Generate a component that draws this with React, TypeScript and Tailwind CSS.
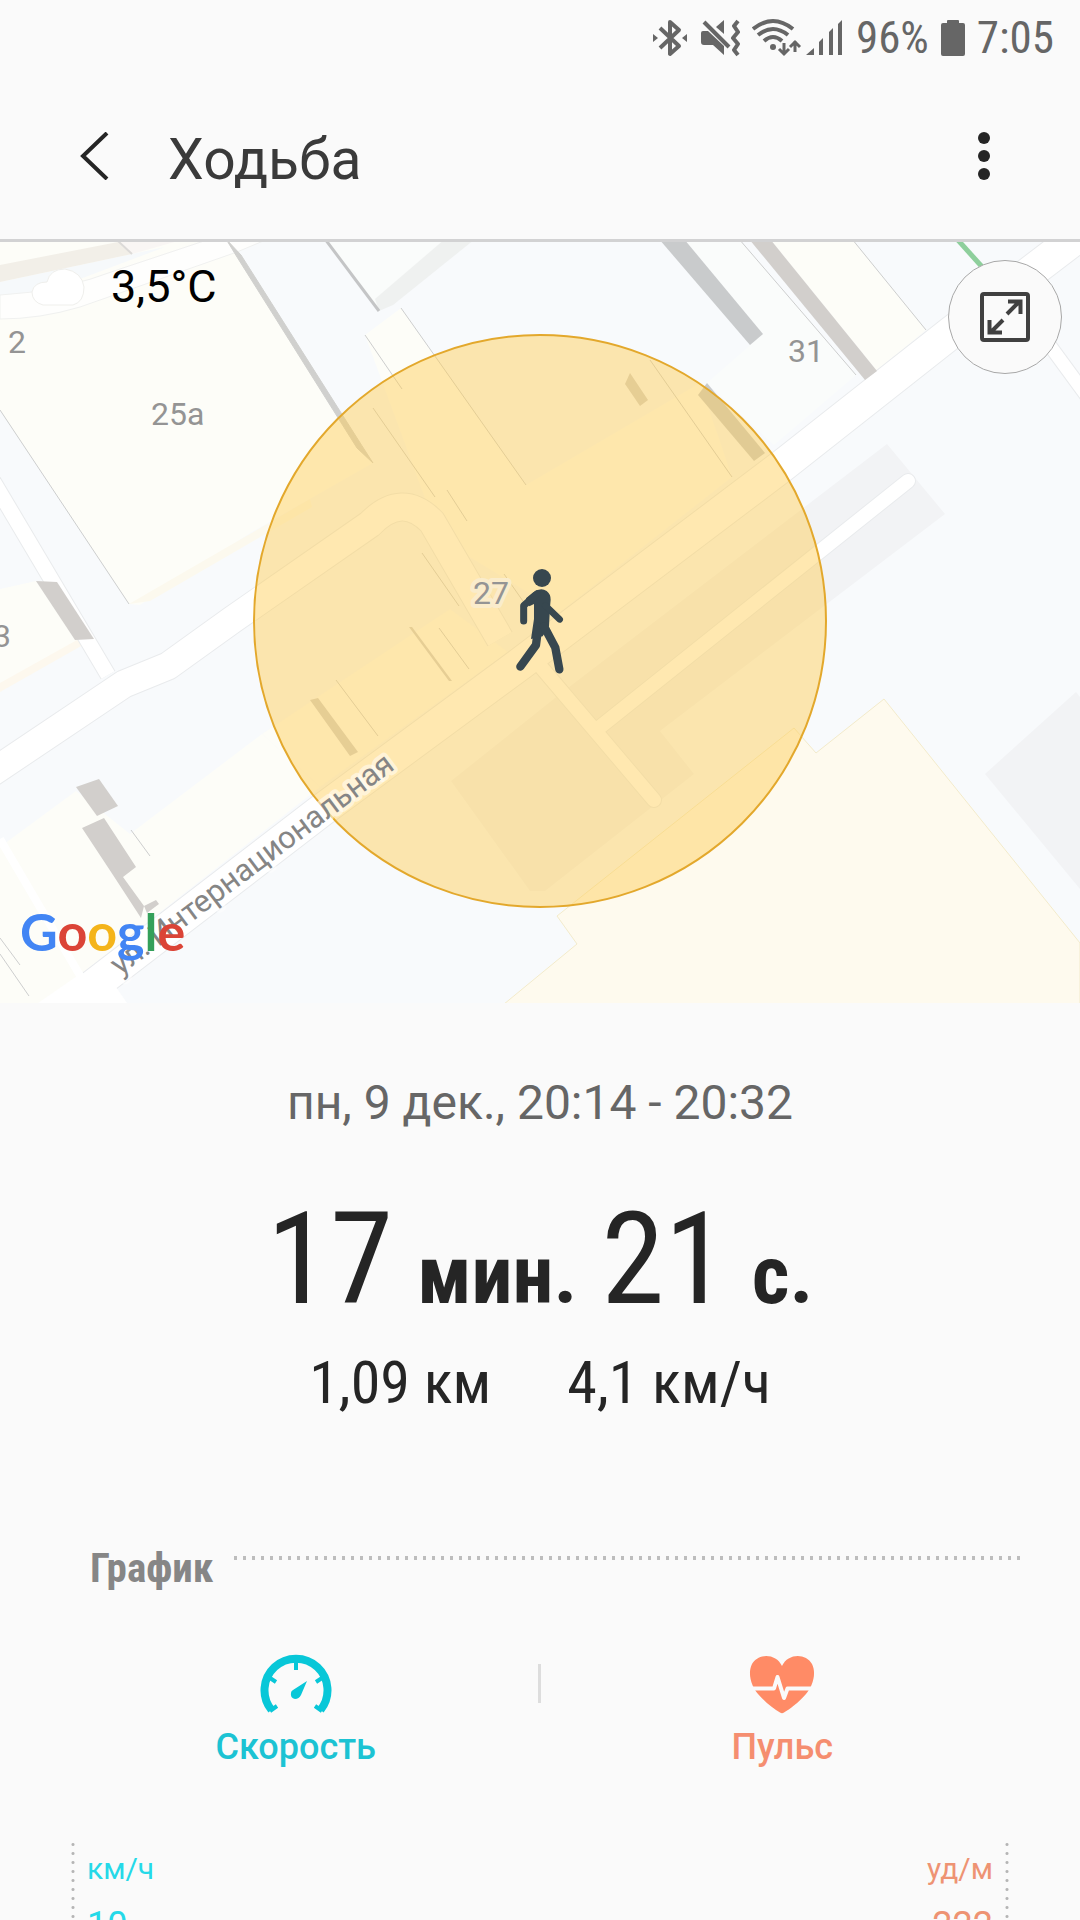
import React from "react";

const BluetoothIcon = () => (
  <svg viewBox="0 0 36 38" className="w-9 h-10" fill="none" stroke="#666666" strokeWidth="4" strokeLinejoin="round">
    <path d="M8 9 L27 27 L18 35 V3 L27 11 L8 29" />
    <path d="M1 15 L6 19 L1 23 Z M35 15 L30 19 L35 23 Z" fill="#666666" stroke="none" />
  </svg>
);

const MuteIcon = () => (
  <svg viewBox="0 0 40 38" className="w-10 h-10" fill="#666666">
    <path d="M1 14 Q1 12 3 12 H8 L24 27 V36 L13 26 H4 Q1 26 1 23 Z" />
    <path d="M24 1 V15 L16 8 Z" />
    <path d="M4 3 L29 28" stroke="#666666" strokeWidth="4" />
    <path d="M38 2 L34 7 L38 13 L33 19 L38 25 L34 31 L38 36" fill="none" stroke="#666666" strokeWidth="4" strokeLinejoin="round" />
  </svg>
);

const WifiIcon = () => (
  <svg viewBox="0 0 50 38" className="w-[50px] h-10" fill="none" stroke="#666666" strokeWidth="4">
    <path d="M1 10 Q21 -6 41 10" />
    <path d="M6 16 Q21 4 36 16" />
    <path d="M12 22 Q21 14 30 22" />
    <circle cx="21" cy="28" r="3" fill="#666666" stroke="none" />
    <path d="M32 24 V35 M27 30 L32 35 L37 30 M43 33 V22 M38 28 L43 23 L48 28" strokeWidth="3" />
  </svg>
);

const SignalIcon = () => (
  <svg viewBox="0 0 38 38" className="w-[38px] h-10" fill="#666666">
    <path d="M0 36 L8 29 V36 Z M13 36 V23 L17 19 V36 Z M23 36 V13 L27 9 V36 Z M32 36 V5 L36 1 V36 Z" />
  </svg>
);

const BatteryIcon = () => (
  <svg viewBox="0 0 24 38" className="w-6 h-10" fill="#666666">
    <path d="M6 4 V2 Q6 1 7 1 H17 Q18 1 18 2 V4 H22 Q24 4 24 6 V35 Q24 37 22 37 H2 Q0 37 0 35 V6 Q0 4 2 4 Z" />
  </svg>
);

const SpeedIcon = () => (
  <svg viewBox="0 0 72 60" className="w-[72px] h-[60px]" fill="none" stroke="#08c7d8">
    <path d="M11.5 56 A31.5 31.5 0 1 1 60.5 56" strokeWidth="8" />
    <path d="M36 8 V16 M10 24 L16 28 M62 24 L56 28 M10 57 L17 52 M62 57 L55 52" strokeWidth="4" />
    <path d="M47 27 L41 41 Q39 45 35 45 Q30 44 31 39 Q31 37 33 36 Z" fill="#08c7d8" stroke="none" />
  </svg>
);

const HeartIcon = () => (
  <svg viewBox="0 0 72 60" className="w-[72px] h-[60px]">
    <path
      d="M36 12 C30 -1 12 -1 6 10 C1 20 6 33 12 40 C20 49 28 55 34 58.5 Q36 60 38 58.5 C44 55 52 49 60 40 C66 33 71 20 66 10 C60 -1 42 -1 36 12 Z"
      fill="#ff8b66"
    />
    <path d="M5 34.5 H28 L31.5 23 L38 44 L41.5 34.5 H67" fill="none" stroke="#fafafa" strokeWidth="4" strokeLinejoin="round" />
  </svg>
);

const StreetMap = () => (
  <svg viewBox="0 243 1080 761" className="block w-full font-[Roboto,sans-serif]" role="img" aria-label="Карта">
    <rect x="0" y="243" width="1080" height="761" fill="#f8fafc" />

    {/* buildings */}
    <g fill="#fdfdf8">
      <path d="M0 240 H226 L373 464 L250 534 L140 606 L129 605 L0 411 Z" />
      <path d="M0 590 L36 582 L77 641 L0 693 Z" />
      <path d="M0 848 L76 792 L130 835 L262 735 L320 788 L90 968 L40 1004 H0 Z" />
      <path d="M770 240 H852 L926 331 L877 372 Z" />
      <path d="M365 336 L401 309 L526 486 L700 384 L732 478 L560 613 L440 540 Z" />
      <path d="M262 735 L450 610 L508 653 L320 788 Z" />
    </g>
    <g fill="#fafcfb">
      <path d="M325 240 H445 L379 312 Z" />
      <path d="M684 240 H739 L856 376 L774 446 L707 384 L763 335 Z" />
    </g>
    <path d="M129 605 L255 532 L310 500 L312 508 L150 602 Z" fill="#fcf9ee" />
    <path d="M0 693 L90 642 L77 641 L0 684 Z" fill="#fdf8ee" />
    <path d="M379 312 L375 300 L445 240 H475 L393 306 Z" fill="#eff1f0" />

    {/* parking lots */}
    <g fill="#f2f3f5">
      <path d="M887 445 L945 515 L660 732 L694 775 L545 892 H530 L451 782 L560 695 Z" />
      <path d="M985 775 L1076 693 L1080 698 V890 Z" />
    </g>

    <path
      d="M884 700 L1080 944 V1010 H498 L577 945 L557 917 L794 729 L816 754 Z"
      fill="#fefaee"
      stroke="#f3ebcb"
    />

    {/* upper left road */}
    <path d="M0 283 L132 255 L165 248 L80 280 L30 296 H0 Z" fill="#f6f9fb" />
    <path d="M0 296 Q60 293 120 270 L210 240 H268 L237 253 L80 308 Q40 320 0 320 Z" fill="#fefefd" stroke="#f0f1f0" />
    <path d="M0 266 L118 243 L132 255 L0 283 Z" fill="#f2efe8" />
    <path d="M118 240 H185 L132 255 Z" fill="#f9f6f4" />
    <path d="M118 242 L132 255" stroke="#dcdad8" strokeWidth="2" />

    {/* road edges first, the white bodies go over them */}
    <g fill="none" stroke="#e9ebed" strokeLinejoin="round">
      <path d="M-10 477 L108 676" strokeWidth="17" />
      <path d="M-10 775 L124 685 L168 667 L232 621 L370 525 Q402 492 432 523 L500 640" strokeWidth="29" />
      <path d="M50 1020 L322 811 L520 665 L782 467 L952 333 L1090 228" strokeWidth="34" />
      <path d="M908 482 L600 728 M530 655 L654 801" strokeWidth="16" strokeLinecap="round" />
      <path d="M1045 340 L1100 415" strokeWidth="15" />
    </g>
    <g fill="none" stroke="#ffffff" strokeLinejoin="round">
      <path d="M-10 477 L108 676" strokeWidth="15" />
      <path d="M-10 775 L124 685 L168 667 L232 621 L370 525 Q402 492 432 523 L500 640" strokeWidth="27" />
      <path d="M50 1020 L322 811 L520 665 L782 467 L952 333 L1090 228" strokeWidth="32" />
      <path d="M908 482 L600 728 M530 655 L654 801" strokeWidth="14" strokeLinecap="round" />
      <path d="M1045 340 L1100 415" strokeWidth="13" />
      <path d="M0 840 L85 985" strokeWidth="8" />
    </g>
    <path d="M38 1004 L80 975 L116 988 L127 1004 Z" fill="#ffffff" />

    {/* walls and shadows */}
    <path d="M226 240 L241 256 L364 450 L373 464 L357 449 L237 258 Z" fill="#d0d0ce" stroke="#d0d0ce" />
    <path d="M325 240 L379 312" stroke="#c4c5c6" strokeWidth="3" />
    <g fill="#c9cbcc">
      <path d="M659 240 H684 L763 335 L750 346 Z" />
      <path d="M707 384 L765 454 L754 462 L698 396 Z" />
    </g>
    <g fill="#d2cfcc">
      <path d="M749 240 H770 L877 372 L865 381 Z" />
      <path d="M36 582 L57 583 L94 640 L75 641 Z" />
      <path d="M630 374 L648 401 L640 407 L625 385 Z" />
      <path d="M310 701 L318 699 L358 753 L350 757 Z" />
      <path d="M409 628 H412 L452 682 H449 Z" />
      <path d="M76 788 L99 780 L118 807 L97 817 Z" />
      <path d="M82 829 L104 819 L136 868 L123 878 L144 907 L141 919 L113 876 Z" />
      <path d="M144 907 L156 901 L159 905 L147 914 Z" />
    </g>
    <g stroke="#cdcece" strokeWidth="1">
      <path d="M0 411 L129 605 M401 309 L526 486 M365 336 L402 390 M373 409 L435 498 M447 491 L467 522" />
      <path d="M422 554 L459 607 M504 575 L525 605 M650 361 L732 478 M739 240 L856 376 M852 240 L926 331" />
      <path d="M336 681 L378 737 M439 629 L469 670 M131 831 L150 857 M0 939 L20 966 M0 955 L29 997" />
    </g>
    <path d="M957 240 L984 270" stroke="#8ecf9c" strokeWidth="5" />

    <circle cx="540" cy="622" r="286" fill="#ffcd50" fillOpacity="0.45" stroke="#e3a82c" strokeWidth="2" />

    {/* weather */}
    <path
      d="M43 306 Q32 303 32 293 Q34 283 47 283 Q50 270 65 270 Q82 273 84 288 Q84 303 73 306 Z"
      fill="#ffffff"
      stroke="#efefec"
    />
    <text x="111" y="303" fontSize="45" fill="#000000">3,5°C</text>

    <g fontSize="32" fill="#949494">
      <text x="8" y="354">2</text>
      <text x="151" y="426">25a</text>
      <text x="788" y="363">31</text>
      <text x="-7" y="648">3</text>
      <text x="473" y="605" stroke="#faeccb" strokeWidth="8" strokeLinejoin="round" paintOrder="stroke">27</text>
      <text
        x="0"
        y="0"
        transform="translate(120 977) rotate(-37)"
        fontSize="31"
        fill="#858585"
        stroke="#ffffff"
        strokeOpacity="0.5"
        strokeWidth="8"
        strokeLinejoin="round"
        paintOrder="stroke"
      >
        ул. Интернациональная
      </text>
    </g>

    {/* walking man */}
    <g transform="translate(480 540) scale(0.3333)" fill="#37474f" stroke="#37474f" strokeLinecap="round" strokeLinejoin="round">
      <circle cx="186" cy="117" r="27" stroke="none" />
      <path d="M160 160 Q182 144 200 156 Q212 165 212 182 L210 205 L207 262 L188 292 L153 300 L162 240 L162 195 L148 202 L138 178 Z" stroke="none" />
      <path d="M172 164 L131 200 L131 246" fill="none" strokeWidth="21" />
      <path d="M196 200 L239 241" fill="none" strokeWidth="20" />
      <path d="M175 262 L168 318 L121 383" fill="none" strokeWidth="25" />
      <path d="M192 262 L226 326 L238 391" fill="none" strokeWidth="25" />
    </g>
  </svg>
);

const googleLetters = [
  { letter: "G", color: "text-[#4285f4]" },
  { letter: "o", color: "text-[#db4437]" },
  { letter: "o", color: "text-[#f4b41a]" },
  { letter: "g", color: "text-[#4285f4]" },
  { letter: "l", color: "text-[#34a05a]" },
  { letter: "e", color: "text-[#db4437]" },
];

const App: React.FC = () => {
  return (
    <div className="h-screen overflow-hidden bg-[#fafafa] font-[Roboto,sans-serif] text-[#252525]">
      <div className="flex items-center justify-end h-[76px] pr-[26px] font-['Roboto_Condensed',Roboto,sans-serif] text-[45px] text-[#666666]">
        <BluetoothIcon />
        <span className="ml-3"><MuteIcon /></span>
        <span className="ml-3"><WifiIcon /></span>
        <span className="ml-1"><SignalIcon /></span>
        <span className="ml-3">96%</span>
        <span className="ml-3"><BatteryIcon /></span>
        <span className="ml-3">7:05</span>
      </div>

      <header className="flex items-center h-[166px] pl-[62px] pr-16 pb-1 border-b-3 border-[#d2d2d3]">
        <button type="button" aria-label="Назад" className="w-16 h-16 flex items-center justify-center">
          <svg viewBox="0 0 30 48" className="w-[30px] h-12" fill="none" stroke="#252525" strokeWidth="4">
            <path d="M28 1 L4 24 L28 47" />
          </svg>
        </button>
        <h1 className="ml-[42px] pt-2 text-[57px] leading-16 text-[#3a3a3a]">Ходьба</h1>
        <button type="button" aria-label="Ещё" className="ml-auto w-16 h-16 flex items-center justify-center">
          <svg viewBox="0 0 12 48" className="w-3 h-12" fill="#252525">
            <circle cx="6" cy="6" r="6" />
            <circle cx="6" cy="24" r="6" />
            <circle cx="6" cy="42" r="6" />
          </svg>
        </button>
      </header>

      <section className="relative">
        <StreetMap />
        <button
          type="button"
          aria-label="На весь экран"
          className="absolute top-[18px] right-[18px] w-[114px] h-[114px] rounded-full bg-[#fafafa] border border-[#a8a8a8] flex items-center justify-center"
        >
          <svg viewBox="0 0 50 50" className="w-[50px] h-[50px]" fill="none" stroke="#404040">
            <rect x="2" y="2" width="46" height="46" rx="2" strokeWidth="4" />
            <path d="M27 22 L39 10 M28 9.5 H40.5 V22 M23 28 L11 40 M22 40.5 H9.5 V28" strokeWidth="4" />
          </svg>
        </button>
        <div className="absolute left-5 bottom-10 font-[Lato,sans-serif] font-bold text-[52px] leading-16">
          {googleLetters.map((item, index) => (
            <span key={index} className={item.color}>{item.letter}</span>
          ))}
        </div>
      </section>

      <section className="pt-[66px] text-center">
        <p className="text-[48px] leading-[68px] text-[#666666]">пн, 9 дек., 20:14 - 20:32</p>
        <p className="mt-12 flex items-baseline justify-center gap-6 font-['Roboto_Condensed',Roboto,sans-serif] text-[128px] leading-[148px]">
          <span>17</span>
          <b className="text-[82px]">мин.</b>
          <span>21</span>
          <b className="text-[82px]">с.</b>
        </p>
        <div className="flex justify-center gap-[76px] font-['Roboto_Condensed',Roboto,sans-serif] text-[60px] leading-[68px]">
          <span>1,09 км</span>
          <span>4,1 км/ч</span>
        </div>
      </section>

      <section className="mt-[126px]">
        <div className="flex pl-[90px] pr-[58px]">
          <h2 className="font-['Roboto_Condensed',Roboto,sans-serif] font-bold text-[41px] leading-[50px] text-[#868686]">График</h2>
          <div className="grow ml-[18px] mt-[13px] h-1 bg-[radial-gradient(circle,#bdbdbd_2px,transparent_2px)] bg-[length:9px_4px]"></div>
        </div>

        <div className="mt-[61px] flex items-center pl-[54px] pr-[56px]">
          <button type="button" className="flex-1 flex flex-col items-center">
            <SpeedIcon />
            <span className="mt-3 font-medium text-[36px] leading-[42px] text-[#1cc3d3]">Скорость</span>
          </button>
          <div className="w-[3px] h-[39px] mb-14 bg-[#dddddd]"></div>
          <button type="button" className="flex-1 flex flex-col items-center">
            <HeartIcon />
            <span className="mt-3 font-medium text-[36px] leading-[42px] text-[#f58e70]">Пульс</span>
          </button>
        </div>

        {/* chart axes */}
        <div className="mt-[72px] mx-[71px] flex justify-between h-40">
          <div className="flex">
            <div className="w-1 bg-[radial-gradient(circle,#b5b5b5_1px,transparent_2px)] bg-[length:4px_9px]"></div>
            <div className="ml-3 mt-[11px] text-[#25d9e8]">
              <p className="text-[30px] leading-9">км/ч</p>
              <p className="mt-4 text-[36px] leading-[44px]">10</p>
            </div>
          </div>
          <div className="flex text-right">
            <div className="mr-3 mt-[11px] text-[#ee9373]">
              <p className="text-[30px] leading-9">уд/м</p>
              <p className="mt-4 text-[36px] leading-[44px]">222</p>
            </div>
            <div className="w-1 bg-[radial-gradient(circle,#b5b5b5_1px,transparent_2px)] bg-[length:4px_9px]"></div>
          </div>
        </div>
      </section>
    </div>
  );
};

export default App;
